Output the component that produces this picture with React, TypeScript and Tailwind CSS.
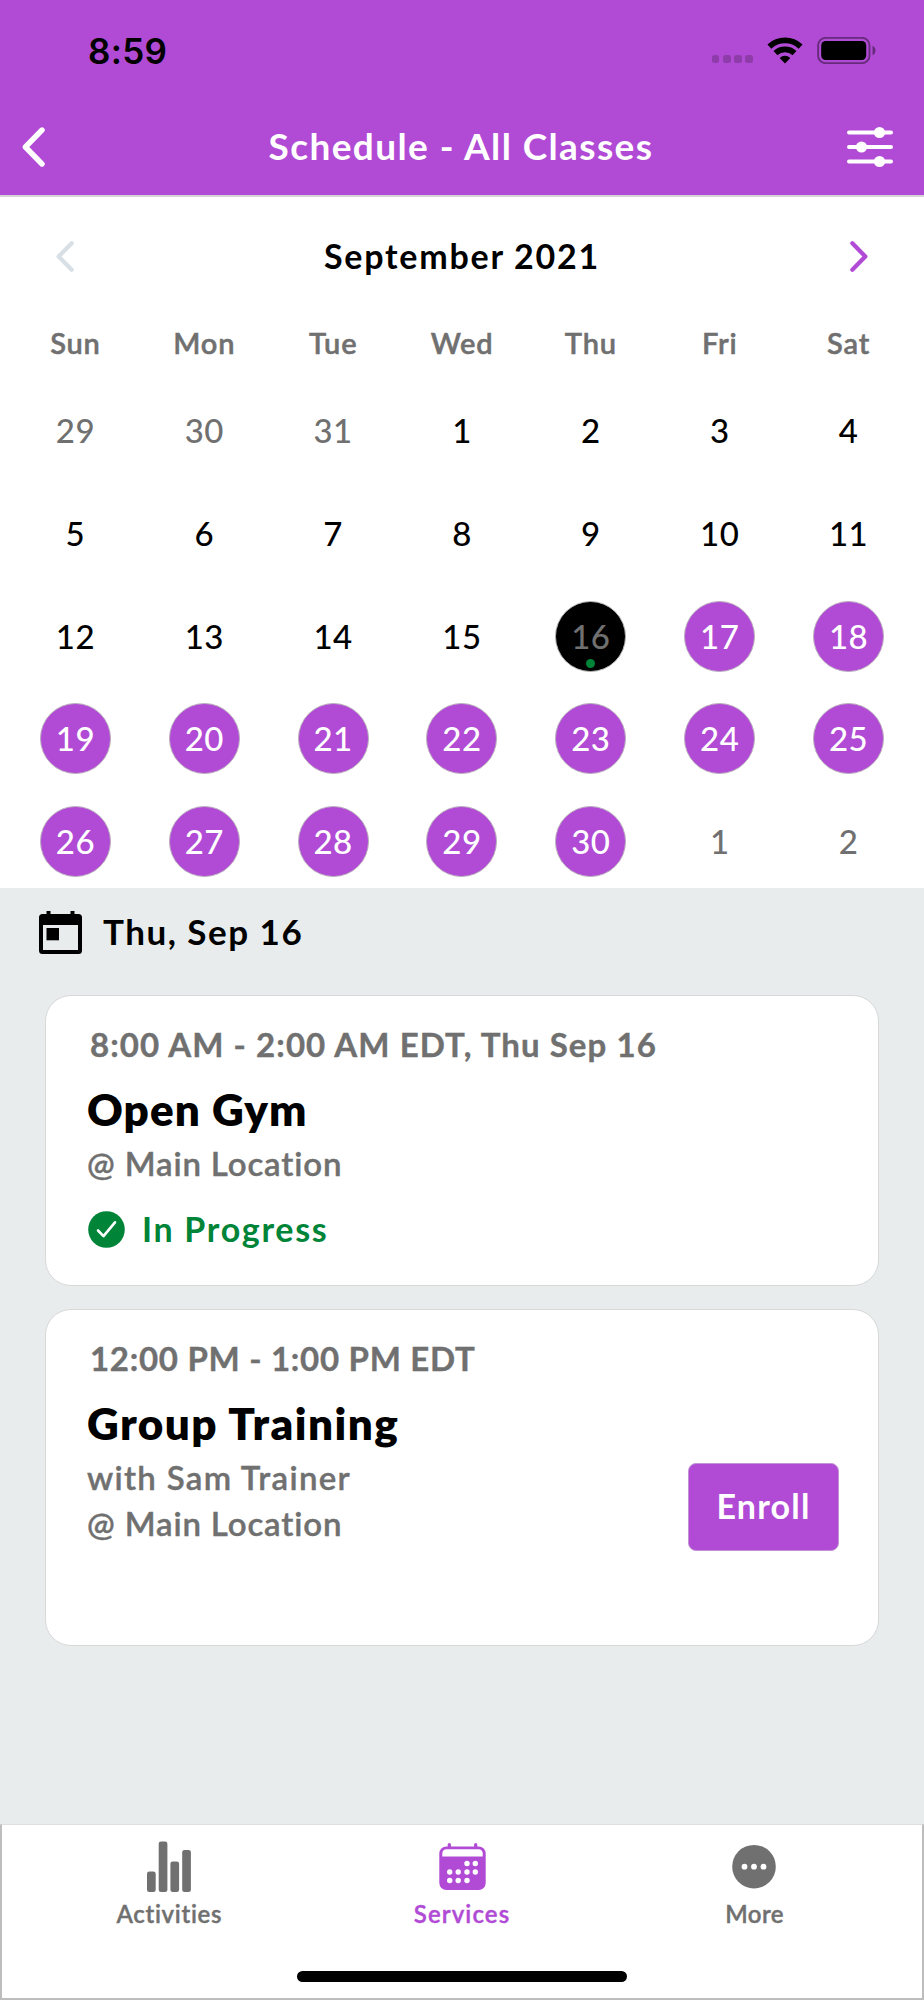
import React, { useState } from 'react';
import clsx from 'clsx';

interface Day {
  label: number;
  state: 'outside' | 'plain' | 'available' | 'selected';
}

interface ClassItem {
  id: string;
  time: React.ReactNode;
  title: React.ReactNode;
  lines: React.ReactNode[];
  inProgress?: boolean;
  canEnroll?: boolean;
  height: string;
}

const weekDays = ['Sun', 'Mon', 'Tue', 'Wed', 'Thu', 'Fri', 'Sat'];

// 29 Aug - 2 Oct 2021, the 16th is the current day
const days: Day[] = Array.from({ length: 35 }, (_, i) => {
  if (i < 3) return { label: 29 + i, state: 'outside' };
  const date = i - 2;
  if (date > 30) return { label: date - 30, state: 'outside' };
  if (date === 16) return { label: date, state: 'selected' };
  return { label: date, state: date > 16 ? 'available' : 'plain' };
});

const classes: ClassItem[] = [
  {
    id: 'open-gym',
    time: <span className="tracking-[1.08px]">8:00 AM - 2:00 AM EDT, Thu Sep 16</span>,
    title: <span className="tracking-[1.05px]">Open Gym</span>,
    lines: [<span className="tracking-[0.85px]">@ Main Location</span>],
    inProgress: true,
    height: 'h-[291px]',
  },
  {
    id: 'group-training',
    time: <span className="tracking-[0.72px]">12:00 PM - 1:00 PM EDT</span>,
    title: <span className="tracking-[1.45px]">Group Training</span>,
    lines: [
      <span className="tracking-[1.3px]">with Sam Trainer</span>,
      <span className="tracking-[0.85px]">@ Main Location</span>,
    ],
    canEnroll: true,
    height: 'h-[337px]',
  },
];

const StatusBar: React.FC = () => (
  <div className="h-[101px] pl-[88px] pr-[48px] flex items-center justify-between text-black">
    <span className="font-['Inter'] font-semibold text-[35px] leading-none tracking-[0.3px] pt-0.5">8:59</span>
    <div className="flex items-center">
      <div className="flex gap-[3.6px] mr-[14px] mt-[17px]">
        {[0, 1, 2, 3].map((i) => (
          <span key={i} className="size-[7.6px] rounded-[2.5px] bg-black/20" />
        ))}
      </div>
      <svg width="36" height="27" viewBox="0 0 36 27" className="mr-[14px]">
        <g fill="none" stroke="currentColor" strokeWidth="5.8">
          <path d="M2.4 9.6A22.9 22.9 0 0 1 33.6 9.6" />
          <path d="M8.5 16.1A14 14 0 0 1 27.5 16.1" />
        </g>
        <path d="M18 26.6L12.7 20.9A7.8 7.8 0 0 1 23.3 20.9Z" fill="currentColor" />
      </svg>
      <svg width="59" height="27" viewBox="0 0 59 27">
        <rect x="1.1" y="0.9" width="51.4" height="25.2" rx="7.4" fill="none" stroke="#000" strokeOpacity="0.42" strokeWidth="1.9" />
        <rect x="4.2" y="4" width="45" height="19" rx="4.4" />
        <path d="M55.5 8.7c1.9.8 3 2.6 3 4.8s-1.1 4-3 4.8z" fillOpacity="0.42" />
      </svg>
    </div>
  </div>
);

const Chevron: React.FC<{ className?: string; flip?: boolean; small?: boolean }> = ({ className, flip, small }) => (
  <svg
    width={small ? 18 : 23}
    height={small ? 31 : 40}
    viewBox="0 0 23 40"
    preserveAspectRatio="none"
    fill="none"
    stroke="currentColor"
    strokeWidth="5.4"
    strokeLinecap="round"
    strokeLinejoin="round"
    className={clsx(className, flip && 'rotate-180')}
  >
    <path d="M20 3L3.4 20L20 37" />
  </svg>
);

const Header: React.FC = () => (
  <header className="bg-[#b14bd5] border-b-2 border-[#d6d3d8] h-[197px]">
    <StatusBar />
    <div className="h-[92px] pl-[22px] pr-[30px] flex items-center justify-between text-white">
      <Chevron />
      <h1 className="font-bold text-[37px] leading-none tracking-[1.4px] pl-[31px] pb-[3px]">Schedule - All Classes</h1>
      <svg width="48" height="42" viewBox="0 0 48 42" stroke="currentColor" strokeWidth="4" strokeLinecap="round" fill="currentColor">
        <path d="M3 6.5H45M3 21H45M3 35.5H45" />
        <g stroke="none">
          <circle cx="33.5" cy="6.5" r="5.6" />
          <circle cx="15.5" cy="21" r="5.6" />
          <circle cx="33.5" cy="35.5" r="5.6" />
        </g>
      </svg>
    </div>
  </header>
);

const EventIcon: React.FC = () => (
  <svg width="43" height="43" viewBox="0 0 43 43" className="mt-0.5">
    <path
      fillRule="evenodd"
      d="M7.5 0h4v3h20V0h4v3H39.5A3.5 3.5 0 0 1 43 6.5V39.5A3.5 3.5 0 0 1 39.5 43H3.5A3.5 3.5 0 0 1 0 39.5V6.5A3.5 3.5 0 0 1 3.5 3H7.5ZM4 14V39H39V14Z"
    />
    <rect x="7.5" y="17" width="12.5" height="12.3" />
  </svg>
);

const ClassCard: React.FC<{ item: ClassItem }> = ({ item }) => (
  <div className={clsx('bg-white border border-[#d8d8d8] rounded-[26px] pl-[41px] pr-[39px] flex justify-between', item.height)}>
    <div className="pt-[27px]">
      <div className="h-11 pl-[3px] flex items-center font-bold text-[33px] text-[#707070] [-webkit-text-stroke:0.4px]">{item.time}</div>
      <h2 className="h-14 mt-[14px] mb-1 flex items-center font-extrabold text-[44px] leading-none">{item.title}</h2>
      {item.lines.map((line, i) => (
        <p key={i} className="h-[46px] flex items-center font-semibold text-[33px] text-[#707070] [-webkit-text-stroke:0.4px]">
          {line}
        </p>
      ))}
      {item.inProgress && (
        <div className="h-[45px] mt-5 flex items-center gap-[17px] text-[#008438]">
          <svg width="37" height="37" viewBox="0 0 37 37" className="ml-px">
            <circle cx="18.5" cy="18.5" r="18.3" fill="currentColor" />
            <path d="M10 19.5L15.5 25.2L27 11.3" fill="none" stroke="#fff" strokeWidth="2.6" strokeLinecap="round" strokeLinejoin="round" />
          </svg>
          <span className="font-bold text-[34px] leading-none tracking-[1.7px] pb-0.5">In Progress</span>
        </div>
      )}
    </div>
    {item.canEnroll && (
      <button className="mt-[153px] w-[151px] h-[88px] pb-[3px] rounded-lg border border-[#c193d3] bg-[#b14bd5] text-white font-bold text-[34px] leading-none tracking-[1.2px]">
        Enroll
      </button>
    )}
  </div>
);

const ActivitiesIcon = () => (
  <svg width="44" height="52" viewBox="0 0 44 52" fill="currentColor">
    <rect x="0" y="30.5" width="8.7" height="20.5" rx="2.3" />
    <rect x="11.7" y="0.5" width="8.7" height="50.5" rx="2.3" />
    <rect x="23.4" y="20.5" width="8.7" height="30.5" rx="2.3" />
    <rect x="35.2" y="9" width="8.7" height="42" rx="2.3" />
  </svg>
);

const calendarDots = [
  [28, 22.5], [36.3, 22.5],
  [10.7, 31], [19.2, 31], [28, 31], [36.3, 31],
  [10.7, 39.5], [19.2, 39.5], [28, 39.5],
];

const ServicesIcon = () => (
  <svg width="47" height="52" viewBox="0 0 47 52" fill="currentColor" className="ml-0.5">
    <path d="M10.3 3.5V7M36.7 3.5V7" stroke="currentColor" strokeWidth="3.2" strokeLinecap="round" />
    <rect x="0.3" y="5.5" width="46.4" height="43.5" rx="7" />
    <path d="M3.3 15.6V12.5A4 4 0 0 1 7.3 8.3H39.7A4 4 0 0 1 43.7 12.5V15.6Z" fill="#fff" />
    {calendarDots.map(([x, y], i) => (
      <circle key={i} cx={x} cy={y} r="2.7" fill="#fff" />
    ))}
  </svg>
);

const MoreIcon = () => (
  <svg width="44" height="52" viewBox="0 0 44 52" fill="currentColor" className="mr-0.5">
    <circle cx="22" cy="25.7" r="21.8" />
    <g fill="#fff">
      <circle cx="12.5" cy="25.7" r="2.9" />
      <circle cx="22" cy="25.7" r="2.9" />
      <circle cx="31.5" cy="25.7" r="2.9" />
    </g>
  </svg>
);

const tabs = [
  { key: 'activities', icon: <ActivitiesIcon />, label: <span className="tracking-[0.7px]">Activities</span> },
  { key: 'services', icon: <ServicesIcon />, label: <span className="tracking-[1.1px]">Services</span> },
  { key: 'more', icon: <MoreIcon />, label: <span className="tracking-[0.4px]">More</span> },
];

const App: React.FC = () => {
  const [activeTab, setActiveTab] = useState('services');

  return (
    <div className="w-[924px] h-[2000px] flex flex-col overflow-hidden bg-white text-black font-['Lato','Open_Sans',sans-serif]">
      <Header />

      {/* Calendar */}
      <section className="h-[691px] px-[11px]">
        <div className="h-[119px] px-[45px] flex items-center justify-between">
          <Chevron small className="text-[#d8e0e6]" />
          <h2 className="font-bold text-[34px] leading-none tracking-[1.75px] pb-0.5">September 2021</h2>
          <Chevron small flip className="text-[#b14bd5]" />
        </div>
        <div className="h-[54px] pb-0.5 grid grid-cols-7 items-center text-center font-semibold text-[29px] leading-none tracking-[0.8px] text-[#707070] [-webkit-text-stroke:0.5px]">
          {weekDays.map((day) => (
            <span key={day}>{day}</span>
          ))}
        </div>
        <div className="mt-[25px] grid grid-cols-7 justify-items-center gap-y-[31.8px]">
          {days.map((day, i) => (
            <div
              key={i}
              className={clsx(
                'relative size-[71px] rounded-full flex items-center justify-center font-medium text-[33px] leading-none tracking-[0.5px]',
                day.state === 'outside' && 'text-[#707070]',
                day.state === 'available' && 'bg-[#b14bd5] border-[1.5px] border-[#b9aebd] text-white',
                day.state === 'selected' && 'bg-black border-[1.5px] border-[#b5b5b5] text-[#707070]'
              )}
            >
              {day.label}
              {day.state === 'selected' && <span className="absolute bottom-[3px] size-[9px] rounded-full bg-[#008438]" />}
            </div>
          ))}
        </div>
      </section>

      {/* Classes of the selected day */}
      <section className="flex-1 bg-[#e8eced]">
        <div className="h-[87px] mb-5 pl-[39px] flex items-center gap-[21px]">
          <EventIcon />
          <span className="font-bold text-[35px] leading-none tracking-[1.5px] pb-px">Thu, Sep 16</span>
        </div>
        <div className="px-[45px] flex flex-col gap-[23px]">
          {classes.map((item) => (
            <ClassCard key={item.id} item={item} />
          ))}
        </div>
      </section>

      {/* Bottom tabs */}
      <nav className="h-44 border-x-2 border-b-2 border-t border-[#bdbdbd] border-t-[#dcdfe0]">
        <div className="pt-4 px-[21px] grid grid-cols-3">
          {tabs.map((tab) => (
            <button
              key={tab.key}
              onClick={() => setActiveTab(tab.key)}
              className={clsx(
                'flex flex-col items-center font-semibold text-[24px] [-webkit-text-stroke:0.4px]',
                activeTab === tab.key ? 'text-[#b14bd5]' : 'text-[#707070]'
              )}
            >
              {tab.icon}
              <span className="mt-1.5 leading-[30px]">{tab.label}</span>
            </button>
          ))}
        </div>
        <div className="mx-auto mt-[42px] w-[330px] h-[11px] rounded-full bg-black" />
      </nav>
    </div>
  );
};

export default App;
